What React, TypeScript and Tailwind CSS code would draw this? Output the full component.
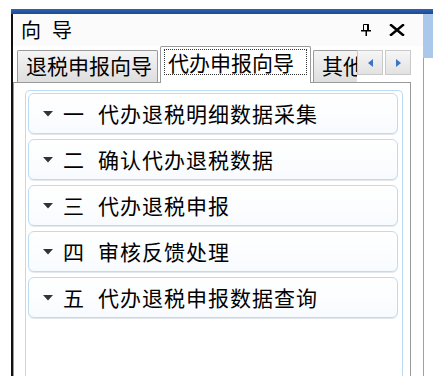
import React from "react";

const steps = [
  { num: "一", label: "代办退税明细数据采集" },
  { num: "二", label: "确认代办退税数据" },
  { num: "三", label: "代办退税申报" },
  { num: "四", label: "审核反馈处理" },
  { num: "五", label: "代办退税申报数据查询" },
];

function PinIcon() {
  return (
    <svg width="10" height="12" viewBox="0 0 10 12" className="block">
      <path d="M2.5 0.5h5v6h-5z" fill="none" stroke="#000" strokeWidth="1" />
      <rect x="6" y="0.5" width="2" height="6" fill="#000" />
      <rect x="0" y="6" width="10" height="1.5" fill="#000" />
      <rect x="4.5" y="7" width="1.5" height="5" fill="#000" />
    </svg>
  );
}

function CloseIcon() {
  return (
    <svg width="16" height="12" viewBox="0 0 16 12" className="block">
      <path d="M2 1 L14 11 M14 1 L2 11" stroke="#000" strokeWidth="2.4" strokeLinecap="square" />
    </svg>
  );
}

function DownArrow() {
  return (
    <svg width="10" height="6" viewBox="0 0 10 6" className="block">
      <path d="M0 0 H10 L5 5.5 Z" fill="#333" />
    </svg>
  );
}

function ScrollButton({ dir }: { dir: "left" | "right" }) {
  return (
    <div className="w-[26px] h-[25px] border border-[#c9c9c9] bg-gradient-to-b from-[#f6f6f6] to-[#e2e2e2] flex items-center justify-center">
      <svg width="5" height="8" viewBox="0 0 5 8" className="block">
        {dir === "left" ? (
          <path d="M5 0 V8 L0 4 Z" fill="#3b74c4" />
        ) : (
          <path d="M0 0 V8 L5 4 Z" fill="#3b74c4" />
        )}
      </svg>
    </div>
  );
}

export default function App() {
  return (
    <div className="w-[439px] h-[376px] bg-white overflow-hidden pt-[9px] pl-[11px] font-['Noto_Sans_CJK_SC','Liberation_Sans',sans-serif] text-black">
      <div className="w-[422px] flex flex-col">
        {/* top blue strip */}
        <div className="h-[5px] bg-gradient-to-b from-[#2f62b0] to-[#1d4a94]" />
        <div className="flex">
          {/* the dock panel */}
          <div className="w-[412px] h-[362px] border-l-2 border-[#111] flex flex-col">
            {/* title */}
            <div className="h-[32px] flex items-center pl-[8px] pr-[18px] bg-[#fbfbfb]">
              <span className="text-[20px] leading-none">向</span>
              <span className="text-[20px] leading-none ml-[11px]">导</span>
              <div className="flex-1" />
              <PinIcon />
              <div className="ml-[18px]">
                <CloseIcon />
              </div>
            </div>

            {/* tabs */}
            <div className="h-[36px] flex items-end pl-[4px] relative">
              <div className="w-[141px] h-[32px] border border-b-0 border-[#9a9a9a] rounded-t-[2px] bg-gradient-to-b from-[#f5f5f5] to-[#dedede] pl-[8px] pt-[4px]">
                <span className="text-[21px] leading-none whitespace-nowrap">退税申报向导</span>
              </div>
              <div className="relative z-10 ml-[2px] w-[151px] h-[37px] -mb-px border border-b-0 border-[#9a9a9a] rounded-t-[2px] bg-white pt-[2px] px-[3px]">
                <div className="h-[26px] border border-dotted border-[#333] pl-[3px] flex items-center">
                  <span className="text-[21px] leading-none whitespace-nowrap">代办申报向导</span>
                </div>
              </div>
              <div className="ml-[2px] w-[44px] h-[32px] border border-b-0 border-r-0 border-[#9a9a9a] rounded-tl-[2px] bg-gradient-to-b from-[#f5f5f5] to-[#dedede] pl-[8px] pt-[4px] overflow-hidden">
                <span className="text-[21px] leading-none whitespace-nowrap">其他</span>
              </div>
              <div className="self-start mt-[4px] flex gap-[2px]">
                <ScrollButton dir="left" />
                <ScrollButton dir="right" />
              </div>
            </div>

            {/* tab page */}
            <div className="flex-1 w-[398px] border border-b-0 border-[#9a9a9a] pl-[11px] pt-[7px] flex flex-col">
              <div className="flex-1 w-[378px] border border-b-0 border-[#bcdcf4] rounded-t-[5px] pl-[2px] pr-[4px] pt-[2px]">
                <div className="flex flex-col gap-[5px]">
                  {steps.map((s) => (
                    <div
                      key={s.num}
                      className="h-[41px] rounded-[6px] border border-[#bcdcf4] bg-gradient-to-b from-white to-[#f8fbfe] shadow-[0_1px_0_#e4e8ec] flex items-center pl-[14px]"
                    >
                      <DownArrow />
                      <span className="ml-[10px] text-[21px] leading-none">{s.num}</span>
                      <span className="ml-[14px] text-[21px] leading-none tracking-[1px] whitespace-nowrap">{s.label}</span>
                    </div>
                  ))}
                </div>
              </div>
            </div>
          </div>

          {/* edge of the window behind */}
          <div className="w-[10px] flex flex-col">
            <div className="h-[44px] bg-[#a9c8ea]" />
            <div className="flex-1 border-l border-[#a0a0a0]" />
          </div>
        </div>
      </div>
    </div>
  );
}
